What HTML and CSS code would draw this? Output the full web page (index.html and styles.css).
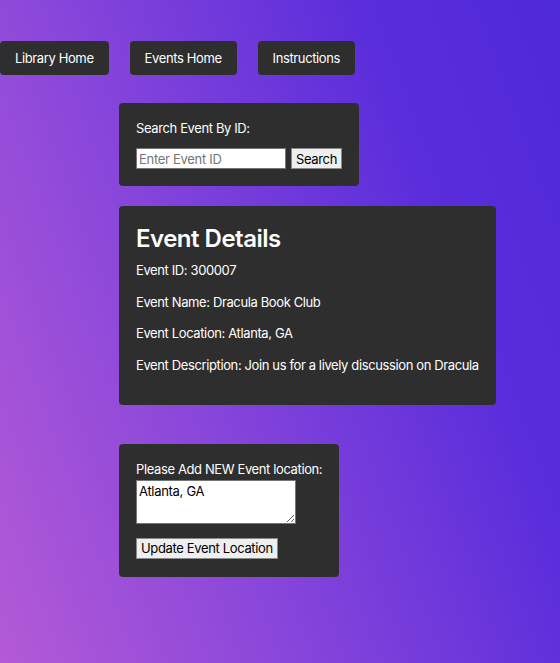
FILE: index.html
```html
<!DOCTYPE html>
<html>
<head>
<meta charset="utf-8">
<link rel="stylesheet" href="styles.css">
</head>
<body>
<nav class="nav">
  <button class="nav-btn">Library Home</button>
  <button class="nav-btn">Events Home</button>
  <button class="nav-btn">Instructions</button>
</nav>
<main class="main">
  <section class="card search-card">
    <label class="label" for="eid">Search Event By ID:</label>
    <div class="search-row">
      <input id="eid" class="field" type="text" placeholder="Enter Event ID">
      <button class="btn">Search</button>
    </div>
  </section>
  <section class="card details-card">
    <h2 class="title">Event Details</h2>
    <p class="line">Event ID: 300007</p>
    <p class="line">Event Name: Dracula Book Club</p>
    <p class="line">Event Location: Atlanta, GA</p>
    <p class="line">Event Description: Join us for a lively discussion on Dracula</p>
  </section>
  <section class="card update-card">
    <label class="label" for="loc">Please Add NEW Event location:</label>
    <textarea id="loc" class="area">Atlanta, GA</textarea>
    <button class="btn update-btn">Update Event Location</button>
  </section>
</main>
</body>
</html>
```
FILE: styles.css
```css
html, body {
  margin: 0;
  height: 100%;
}
body {
  font-family: Inter, "Noto Sans", sans-serif;
  font-size: 13px;
  letter-spacing: -0.38px;
  color: #fff;
  background: linear-gradient(70deg, #b35ad6 0%, #8a47da 35%, #5a2ddb 75%, #4f28d8 100%);
  min-height: 663px;
}
.nav {
  display: flex;
  gap: 21px;
  padding-top: 41px;
}
.nav-btn {
  height: 34px;
  padding: 0 15px;
  border: none;
  border-radius: 4px;
  background: #2e2e2e;
  color: #fff;
  font-family: inherit;
  font-size: 13px;
  letter-spacing: -0.38px;
}
.main {
  display: flex;
  flex-direction: column;
  align-items: flex-start;
  margin-left: 119px;
  margin-top: 28px;
}
.card {
  background: #2e2e2e;
  border-radius: 4px;
  padding: 17px;
  box-sizing: border-box;
  display: flex;
  flex-direction: column;
  align-items: flex-start;
}
.label {
  line-height: 16px;
}
.search-card .label {
  margin-bottom: 12px;
}
.search-row {
  display: flex;
  gap: 5px;
}
.field {
  width: 150px;
  height: 21px;
  box-sizing: border-box;
  border: 1px solid #767676;
  padding: 1px 2px;
  font-family: inherit;
  font-size: 13px;
  letter-spacing: -0.3px;
  color: #000;
  background: #fff;
}
.field::placeholder {
  color: #757575;
}
.btn {
  height: 21px;
  box-sizing: border-box;
  padding: 0 4px;
  border: 1px solid #8a8a8a;
  border-radius: 0;
  background: #efefef;
  color: #000;
  font-family: inherit;
  font-size: 13px;
  letter-spacing: -0.35px;
}
.details-card {
  margin-top: 20px;
  padding-bottom: 31px;
}
.title {
  margin: 0 0 6px;
  font-size: 24px;
  font-weight: 600;
  letter-spacing: -0.5px;
  line-height: 32px;
}
.line {
  margin: 0 0 13.5px;
  line-height: 18px;
}
.line:last-child {
  margin-bottom: 0;
}
.update-card {
  margin-top: 39px;
  padding-bottom: 18px;
}
.area {
  margin-top: 3px;
  width: 160px;
  height: 44px;
  box-sizing: border-box;
  border: 1px solid #767676;
  padding: 2px;
  font-family: inherit;
  font-size: 13px;
  letter-spacing: -0.3px;
  color: #000;
  resize: both;
}
.update-btn {
  margin-top: 14px;
}
```
